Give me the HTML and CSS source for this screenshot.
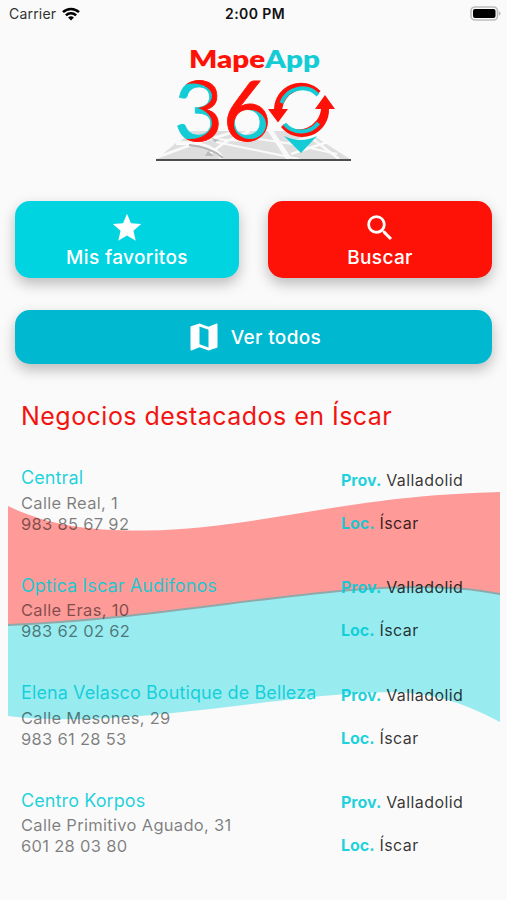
FILE: index.html
```html
<!DOCTYPE html>
<html lang="es">
<head>
    <meta charset="UTF-8">
    <meta name="viewport" content="width=device-width, initial-scale=1.0">
    <title>MapeApp 360</title>
    <link rel="stylesheet" href="styles.css">
</head>
<body>
    <div class="status-bar">
        <div class="carrier">
            <span>Carrier</span>
            <svg class="wifi" viewBox="0 0 18 14" fill="none" stroke="#000" stroke-width="2.5">
                <path d="M1 5.2a11.3 11.3 0 0 1 16 0"/>
                <path d="M3.9 8.4a7.2 7.2 0 0 1 10.2 0"/>
                <path d="M9 13.6l-2.9-3a4.1 4.1 0 0 1 5.8 0z" fill="#000" stroke="none"/>
            </svg>
        </div>
        <div class="clock">2:00 PM</div>
        <svg class="battery" viewBox="0 0 31 15">
            <rect x="1" y="1" width="26.5" height="13" rx="4" fill="#fafafa" stroke="#bdbdbd" stroke-width="1.6"/>
            <rect x="3" y="3" width="22.5" height="9" rx="2" fill="#000"/>
            <path d="M28.8 5.2v4.6q1.9-.8 1.9-2.3t-1.9-2.3z" fill="#bdbdbd"/>
        </svg>
    </div>

    <header class="header">
        <svg class="logo" viewBox="150 40 210 130">
            <defs>
                <!-- red outside, cyan inside of each bowl -->
                <pattern id="bowls" patternUnits="userSpaceOnUse" x="150" y="40" width="210" height="130">
                    <rect width="210" height="130" fill="#fe1208"/>
                    <ellipse cx="43" cy="56" rx="19" ry="12.5" fill="#14ccd6"/>
                    <ellipse cx="40" cy="83" rx="22" ry="16" fill="#14ccd6"/>
                    <ellipse cx="100" cy="84.5" rx="16" ry="14.5" fill="#14ccd6"/>
                </pattern>
            </defs>

            <!-- street map -->
            <path d="M190 131h116l44 28H157z" fill="#dedede"/>
            <g fill="none" stroke="#fafafa">
                <path d="M176 143q24 0 34 5t12 11" stroke-width="4"/>
                <path d="M187 133l-8 8M158 157l38-14 42-12M207 156l18-14 25-11" stroke-width="2.5"/>
                <path d="M216 142l83 17M232 135l60 9 45 10M194 138l52 3" stroke-width="2"/>
                <path d="M270 130l19 29" stroke-width="5"/>
                <path d="M288 143l34-9M291 154l43-14M305 133l34 26" stroke-width="2.5"/>
            </g>
            <path d="M189 145q22 2 34 13" fill="none" stroke="#b5b5b5" stroke-width="2"/>
            <path d="M208 151l6 5h-9zM211 138l9 2-5 2z" fill="#bcbcbc"/>
            <path d="M156 160h195" stroke="#4d4d4d" stroke-width="1.8"/>
            <path d="M284 136q17 8 33 0l-16 17z" fill="#14ccd6"/>

            <text class="brand" x="189" y="68" textLength="131" lengthAdjust="spacingAndGlyphs"><tspan class="red">Mape</tspan><tspan class="cyan">App</tspan></text>
            <text class="digit" x="174" y="141" textLength="49" lengthAdjust="spacingAndGlyphs">3</text>
            <text class="digit" x="223" y="141" textLength="48" lengthAdjust="spacingAndGlyphs">6</text>

            <!-- 360 arrows -->
            <path d="M320.500 91A27 27 0 0 0 274 110H282A22.500 22.500 0 0 1 318 94z" fill="#fe1208"/>
            <path d="M281 127A27 27 0 0 0 329 109H321A22.500 22.500 0 0 1 284 124z" fill="#fe1208"/>
            <path d="M318 95A22 22 0 0 0 281.500 103M284.500 124A22 22 0 0 0 318.500 123" fill="none" stroke="#14ccd6" stroke-width="4"/>
            <path d="M268 109h20l-10 13.500zM315 109h20l-10-14z" fill="#fe1208"/>
        </svg>
    </header>

    <nav class="actions">
        <button class="action favorites">
            <svg class="icon" viewBox="0 0 24 24"><path d="M12 17.27L18.18 21l-1.64-7.03L22 9.24l-7.19-.61L12 2 9.19 8.63 2 9.24l5.46 4.73L5.82 21z"/></svg>
            <span>Mis favoritos</span>
        </button>
        <button class="action search">
            <svg class="icon" viewBox="0 0 24 24"><path d="M15.5 14h-.79l-.28-.27A6.471 6.471 0 0 0 16 9.5 6.5 6.5 0 1 0 9.5 16c1.61 0 3.09-.59 4.23-1.57l.27.28v.79l5 4.99L20.49 19l-4.99-5zm-6 0C7.01 14 5 11.99 5 9.5S7.01 5 9.5 5 14 7.01 14 9.5 11.99 14 9.5 14z"/></svg>
            <span>Buscar</span>
        </button>
        <button class="action all">
            <svg class="icon" viewBox="0 0 24 24"><path d="M20.5 3l-.16.03L15 5.1 9 3 3.36 4.9c-.21.07-.36.25-.36.48V20.5c0 .28.22.5.5.5l.16-.03L9 18.9l6 2.1 5.64-1.9c.21-.07.36-.25.36-.48V3.5c0-.28-.22-.5-.5-.5zM15 19l-6-2.11V5l6 2.11V19z"/></svg>
            <span>Ver todos</span>
        </button>
    </nav>

    <main class="featured">
        <svg class="waves" viewBox="8 490 492 234">
            <path d="M8 506C50 526 90 531 145 530.500C260 529 340 496 500 492V594C460 586 415 585 345 590.500C240 600 130 620 8 625z" fill="#fe9a97"/>
            <path d="M8 625C130 620 240 600 345 590.500C415 585 460 586 500 594V722C450 696 420 690 360 693C280 698 180 716 90 719Q40 720 8 716z" fill="#98ebef"/>
            <path d="M8 625C130 620 240 600 345 590.500C415 585 460 586 500 594" fill="none" stroke="#8fa9aa" stroke-width="2"/>
        </svg>
        <h1>Negocios destacados en Íscar</h1>
        <ul class="business-list">
            <li class="business">
                <div class="info">
                    <h2>Central</h2>
                    <p>Calle Real, 1</p>
                    <p>983 85 67 92</p>
                </div>
                <div class="place">
                    <p><b>Prov.</b> Valladolid</p>
                    <p><b>Loc.</b> Íscar</p>
                </div>
            </li>
            <li class="business">
                <div class="info">
                    <h2>Optica Iscar Audifonos</h2>
                    <p>Calle Eras, 10</p>
                    <p>983 62 02 62</p>
                </div>
                <div class="place">
                    <p><b>Prov.</b> Valladolid</p>
                    <p><b>Loc.</b> Íscar</p>
                </div>
            </li>
            <li class="business">
                <div class="info">
                    <h2>Elena Velasco Boutique de Belleza</h2>
                    <p>Calle Mesones, 29</p>
                    <p>983 61 28 53</p>
                </div>
                <div class="place">
                    <p><b>Prov.</b> Valladolid</p>
                    <p><b>Loc.</b> Íscar</p>
                </div>
            </li>
            <li class="business">
                <div class="info">
                    <h2>Centro Korpos</h2>
                    <p>Calle Primitivo Aguado, 31</p>
                    <p>601 28 03 80</p>
                </div>
                <div class="place">
                    <p><b>Prov.</b> Valladolid</p>
                    <p><b>Loc.</b> Íscar</p>
                </div>
            </li>
        </ul>
    </main>
</body>
</html>
```
FILE: styles.css
```css
* {
    margin: 0;
    padding: 0;
    box-sizing: border-box;
}

body {
    font-family: Inter, 'Liberation Sans', sans-serif;
    background: #fafafa;
    color: #333;
    height: 900px;
    overflow: hidden;
}

.status-bar {
    display: grid;
    grid-template-columns: 1fr auto 1fr;
    align-items: center;
    height: 27px;
    padding: 0 6px 0 9px;
    font-size: 14px;
}

.carrier {
    display: flex;
    align-items: center;
    gap: 6px;
    letter-spacing: 0.2px;
}

.wifi {
    width: 18px;
    height: 14px;
}

.clock {
    font-weight: 600;
    letter-spacing: 0.4px;
    color: #111;
}

.battery {
    width: 31px;
    height: 15px;
    justify-self: end;
}

.header {
    display: flex;
    justify-content: center;
    padding: 13px 0 31px 3px;
}

.logo {
    width: 210px;
    height: 130px;
}

.brand {
    font-family: Lato, sans-serif;
    font-size: 24px;
    font-weight: 800;
}

.digit {
    font-family: Lato, sans-serif;
    font-size: 84px;
    fill: url(#bowls);
    stroke: url(#bowls);
    stroke-width: 0.8px;
}

.red {
    fill: #fe1208;
}

.cyan {
    fill: #14ccd6;
}

.actions {
    display: grid;
    grid-template-columns: 1fr 1fr;
    gap: 32px 29px;
    padding: 0 15px;
}

.action {
    display: flex;
    flex-direction: column;
    align-items: center;
    gap: 1px;
    height: 77px;
    padding-top: 10px;
    border: none;
    border-radius: 15px;
    box-shadow: 0 6px 14px rgba(0, 0, 0, 0.25);
    font-family: inherit;
    font-size: 19px;
    font-weight: 500;
    letter-spacing: 0.35px;
    line-height: 24px;
    color: #fff;
    cursor: pointer;
}

.icon {
    width: 34px;
    height: 34px;
    fill: #fff;
}

.favorites {
    background: #00d4e1;
}

.search {
    background: #fe1208;
}

.all {
    grid-column: 1 / 3;
    flex-direction: row;
    justify-content: center;
    gap: 9px;
    height: 54px;
    padding: 0;
    background: #00b8d0;
}

.all .icon {
    width: 36px;
    height: 36px;
}

.all span {
    padding-top: 1px;
}

.featured {
    position: relative;
    padding: 36px 21px 0;
}

.waves {
    position: absolute;
    z-index: -1;
    top: 126px;
    left: 8px;
    width: 492px;
    height: 234px;
}

h1 {
    font-size: 25px;
    font-weight: 400;
    letter-spacing: 0.47px;
    line-height: 32px;
    color: #f21410;
}

.business-list {
    margin-top: 34px;
    list-style: none;
}

.business {
    display: grid;
    grid-template-columns: 320px 1fr;
    height: 107.5px;
}

.info {
    font-size: 16.5px;
    line-height: 20.7px;
    letter-spacing: 0.3px;
    color: rgba(0, 0, 0, 0.5);
}

.info h2 {
    margin-bottom: 2.8px;
    font-size: 18px;
    font-weight: 400;
    letter-spacing: 0.1px;
    line-height: 24px;
    color: rgba(0, 204, 216, 0.88);
}

.place {
    display: flex;
    flex-direction: column;
    gap: 23px;
    padding-top: 3.5px;
    font-size: 16px;
    letter-spacing: 0.4px;
    line-height: 20px;
    color: rgba(0, 0, 0, 0.8);
}

.place b {
    font-weight: 700;
    letter-spacing: 0;
    color: rgba(0, 204, 216, 0.88);
}
```
